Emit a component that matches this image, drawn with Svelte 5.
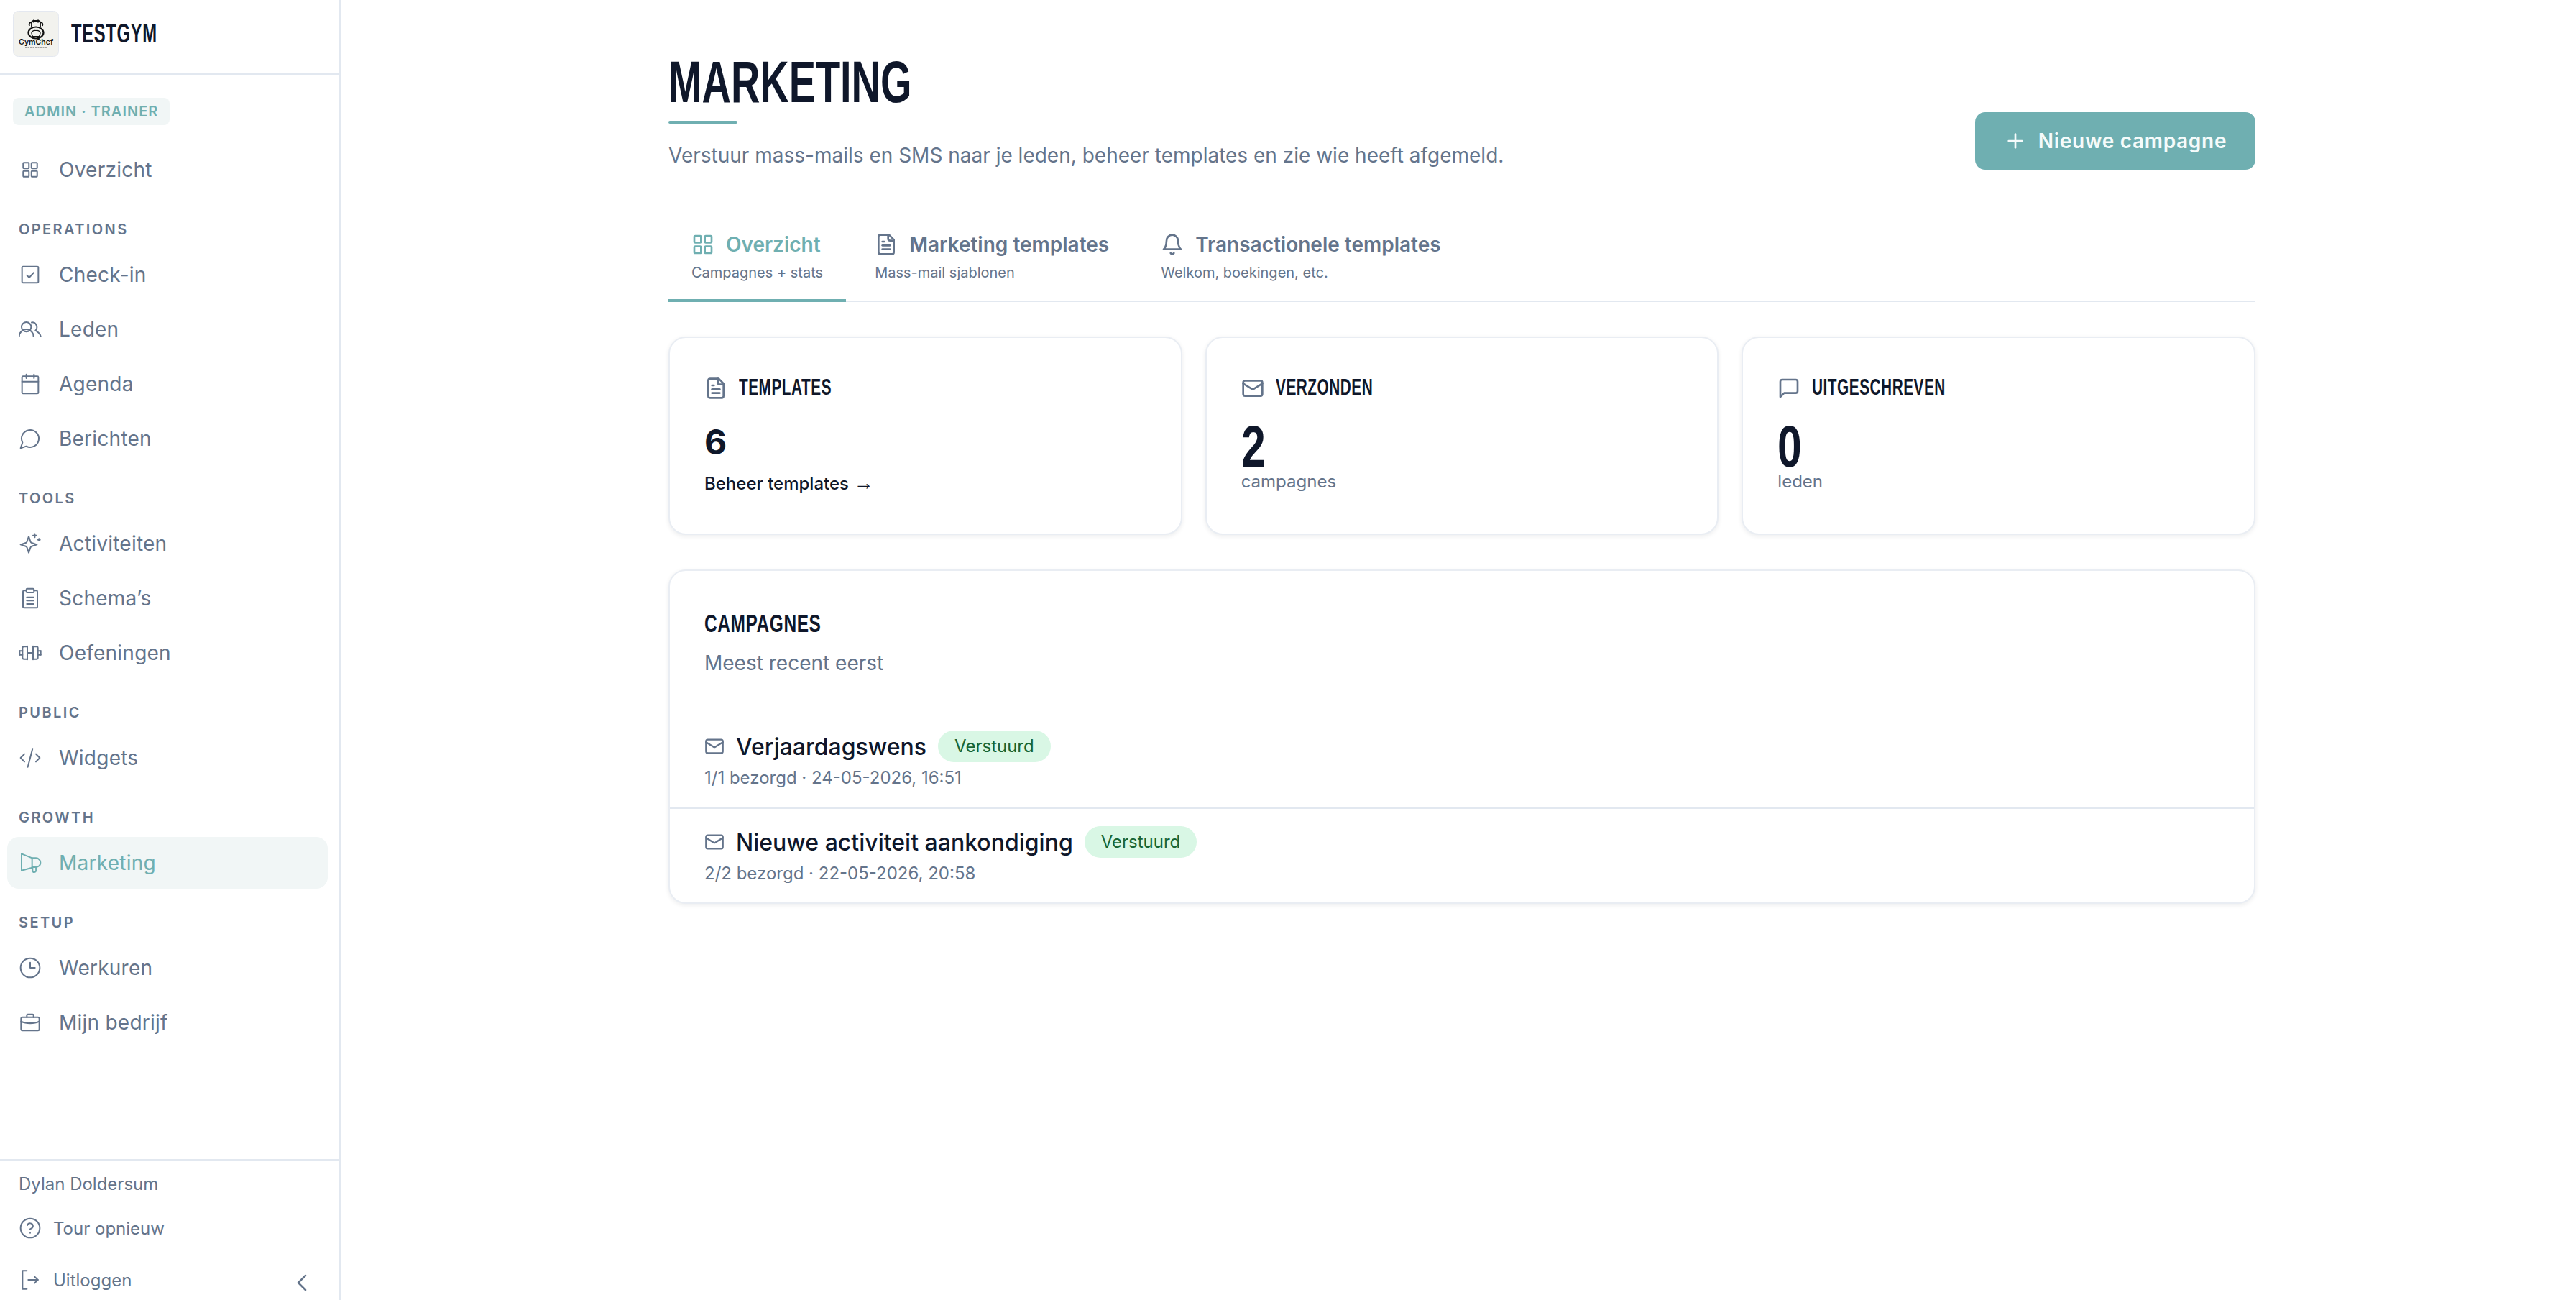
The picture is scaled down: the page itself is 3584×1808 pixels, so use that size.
<script lang="ts">
  // icon paths, 24 unit box
  const circle = 'M22 12a10 10 0 1 1-20 0 10 10 0 0 1 20 0z'
  const mail = ['M4 4h16a2 2 0 0 1 2 2v12a2 2 0 0 1-2 2H4a2 2 0 0 1-2-2V6a2 2 0 0 1 2-2z', 'm22 7-8.97 5.7a1.94 1.94 0 0 1-2.06 0L2 7']
  const fileText = ['M15 2H6a2 2 0 0 0-2 2v16a2 2 0 0 0 2 2h12a2 2 0 0 0 2-2V7Z', 'M14 2v4a2 2 0 0 0 2 2h4', 'M10 9H8', 'M16 13H8', 'M16 17H8']
  const icons: Record<string, string[]> = {
    grid: ['M5.5 4.7h4.4a.8.8 0 0 1 .8.8v4.4a.8.8 0 0 1-.8.8H5.5a.8.8 0 0 1-.8-.8V5.5a.8.8 0 0 1 .8-.8z', 'M14.1 4.7h4.4a.8.8 0 0 1 .8.8v4.4a.8.8 0 0 1-.8.8h-4.4a.8.8 0 0 1-.8-.8V5.5a.8.8 0 0 1 .8-.8z', 'M5.5 13.3h4.4a.8.8 0 0 1 .8.8v4.4a.8.8 0 0 1-.8.8H5.5a.8.8 0 0 1-.8-.8v-4.4a.8.8 0 0 1 .8-.8z', 'M14.1 13.3h4.4a.8.8 0 0 1 .8.8v4.4a.8.8 0 0 1-.8.8h-4.4a.8.8 0 0 1-.8-.8v-4.4a.8.8 0 0 1 .8-.8z'],
    gridLarge: ['M4 3h5a1 1 0 0 1 1 1v5a1 1 0 0 1-1 1H4a1 1 0 0 1-1-1V4a1 1 0 0 1 1-1z', 'M15 3h5a1 1 0 0 1 1 1v5a1 1 0 0 1-1 1h-5a1 1 0 0 1-1-1V4a1 1 0 0 1 1-1z', 'M4 14h5a1 1 0 0 1 1 1v5a1 1 0 0 1-1 1H4a1 1 0 0 1-1-1v-5a1 1 0 0 1 1-1z', 'M15 14h5a1 1 0 0 1 1 1v5a1 1 0 0 1-1 1h-5a1 1 0 0 1-1-1v-5a1 1 0 0 1 1-1z'],
    check: ['M4.5 3.5h15a1 1 0 0 1 1 1v15a1 1 0 0 1-1 1h-15a1 1 0 0 1-1-1v-15a1 1 0 0 1 1-1z', 'm8.5 12.5 2.5 2.5 4.5-5'],
    users: ['M15.5 19.5a7.5 7.5 0 0 0-15 0', 'M13 9.5a5 5 0 1 1-10 0 5 5 0 0 1 10 0z', 'M13.5 4.8a5 5 0 0 1 4 8.5c2.8 1.5 5 3.8 5.5 6.2'],
    calendar: ['M8 2v4', 'M16 2v4', 'M4.5 4h15a1 1 0 0 1 1 1v16a1 1 0 0 1-1 1h-15a1 1 0 0 1-1-1V5a1 1 0 0 1 1-1z', 'M3.5 9.5h17'],
    message: ['M7.9 20A9 9 0 1 0 4 16.1L2 22Z'],
    sparkle: ['M10.5 4.5l1.8 5.4a2 2 0 0 0 1.3 1.3l5.4 1.8-5.4 1.8a2 2 0 0 0-1.3 1.3l-1.8 5.4-1.8-5.4a2 2 0 0 0-1.3-1.3L2 13l5.4-1.8a2 2 0 0 0 1.3-1.3z', 'M16.8 1.8v3.6', 'M15 3.6h3.6', 'M21.2 7v2', 'M20.2 8h2'],
    clipboard: ['M9 2h6a1 1 0 0 1 1 1v2a1 1 0 0 1-1 1H9a1 1 0 0 1-1-1V3a1 1 0 0 1 1-1z', 'M16 4h2.5a1 1 0 0 1 1 1v16a1 1 0 0 1-1 1h-13a1 1 0 0 1-1-1V5a1 1 0 0 1 1-1H8', 'M8.5 11h7', 'M8.5 14.5h7', 'M8.5 18h7'],
    dumbbell: ['M9 5v14', 'M15 5v14', 'M9 12h6', 'M1 10v4', 'M23 10v4', 'M9 5.5H5.5A1.5 1.5 0 0 0 4 7v10a1.5 1.5 0 0 0 1.5 1.5H9', 'M15 5.5h3.5A1.5 1.5 0 0 1 20 7v10a1.5 1.5 0 0 1-1.5 1.5H15', 'M4 10H1', 'M4 14H1', 'M20 10h3', 'M20 14h3'],
    code: ['m18 16 4-4-4-4', 'm6 8-4 4 4 4', 'm14.5 2.5-5 19'],
    megaphone: ['M3 2.5l11 4.5v10L3 20z', 'M14 7h4a4.75 4.75 0 0 1 0 9.5h-4', 'M14.5 17v3a1.8 1.8 0 0 0 3.6 0v-3.5'],
    clock: [circle, 'M12 6.5V12h5'],
    briefcase: ['M4 6.5h16A1.5 1.5 0 0 1 21.5 8v11a1.5 1.5 0 0 1-1.5 1.5H4A1.5 1.5 0 0 1 2.5 19V8A1.5 1.5 0 0 1 4 6.5z', 'M8.5 6.5v-2a1 1 0 0 1 1-1h5a1 1 0 0 1 1 1v2', 'M2.5 11c3 1.5 6 2 9.5 2s6.5-.5 9.5-2', 'M11 12.5h2'],
    help: [circle, 'M9.09 9a3 3 0 0 1 5.83 1c0 2-3 3-3 3', 'M12 17h.01'],
    logout: ['M8.5 2.5H4v19h4.5', 'M10 12h10', 'm16.5 8.5 3.5 3.5-3.5 3.5'],
    chevron: ['m15 18-6-6 6-6'],
    plus: ['M5 12h14', 'M12 5v14'],
    bell: ['M6 8a6 6 0 0 1 12 0c0 7 3 9 3 9H3s3-2 3-9', 'M10.3 21a1.94 1.94 0 0 0 3.4 0'],
    fileText,
    mail,
    square: ['M21 15a2 2 0 0 1-2 2H7l-4 4V5a2 2 0 0 1 2-2h14a2 2 0 0 1 2 2z']
  }

  const navGroups = [
    { label: '', items: [{ name: 'Overzicht', icon: 'grid' }] },
    { label: 'Operations', items: [
      { name: 'Check-in', icon: 'check' },
      { name: 'Leden', icon: 'users' },
      { name: 'Agenda', icon: 'calendar' },
      { name: 'Berichten', icon: 'message' }
    ] },
    { label: 'Tools', items: [
      { name: 'Activiteiten', icon: 'sparkle' },
      { name: 'Schema’s', icon: 'clipboard' },
      { name: 'Oefeningen', icon: 'dumbbell' }
    ] },
    { label: 'Public', items: [{ name: 'Widgets', icon: 'code' }] },
    { label: 'Growth', items: [{ name: 'Marketing', icon: 'megaphone', active: true }] },
    { label: 'Setup', items: [
      { name: 'Werkuren', icon: 'clock' },
      { name: 'Mijn bedrijf', icon: 'briefcase' }
    ] }
  ]

  const tabs = [
    { title: 'Overzicht', sub: 'Campagnes + stats', icon: 'gridLarge', active: true },
    { title: 'Marketing templates', sub: 'Mass-mail sjablonen', icon: 'fileText' },
    { title: 'Transactionele templates', sub: 'Welkom, boekingen, etc.', icon: 'bell' }
  ]

  const campaigns = [
    { name: 'Verjaardagswens', meta: '1/1 bezorgd · 24-05-2026, 16:51' },
    { name: 'Nieuwe activiteit aankondiging', meta: '2/2 bezorgd · 22-05-2026, 20:58' }
  ]
</script>

{#snippet icon(name: string, size = 16, stroke = 2)}
  <svg class="icon" width={size} height={size} viewBox="0 0 24 24" fill="none" stroke="currentColor" stroke-width={stroke} stroke-linecap="round" stroke-linejoin="round">
    {#each icons[name] as d}
      <path {d} />
    {/each}
  </svg>
{/snippet}

<div class="app">
  <aside class="sidebar">
    <div class="brand">
      <svg class="logo" width="32" height="32" viewBox="0 0 64 64">
        <rect x="0.5" y="0.5" width="63" height="63" rx="7" fill="#f2f2ee" stroke="#e4e8f0" />
        <g fill="none" stroke="#111" stroke-width="1.8">
          <path d="M26 23v-6a3 3 0 0 1 3-3h6a3 3 0 0 1 3 3v6" />
          <path d="M23 21c-1-3 0-5 3-5M41 21c1-3 0-5-3-5" />
          <path d="M29 12.5v4M35 12.5v4M29 14.5h6" />
          <ellipse cx="32" cy="30.5" rx="10.5" ry="8" stroke-width="2.2" />
          <path d="M26.5 33c-2-4 2-6 5.5-5.5 3.5-.5 7.5 1.5 5.5 5.5l-1 2.5h-9z" stroke-width="1.2" />
        </g>
        <text x="32" y="47" text-anchor="middle" class="logo-text">GymChef</text>
        <path d="M17 51h30" stroke="#555" stroke-width="1" stroke-dasharray="2 1.5" />
      </svg>
      <span class="brand-name">TESTGYM</span>
    </div>

    <nav class="nav">
      <span class="role">ADMIN · TRAINER</span>
      {#each navGroups as group}
        <div class="group">
          {#if group.label}
            <div class="group-label">{group.label}</div>
          {/if}
          {#each group.items as item}
            <a class="nav-item" class:active={item.active} href="#top">
              {@render icon(item.icon, 16, 1.5)}
              <span>{item.name}</span>
            </a>
          {/each}
        </div>
      {/each}
    </nav>

    <div class="foot">
      <div class="user">Dylan Doldersum</div>
      <a class="foot-link" href="#top">
        {@render icon('help', 16, 1.5)}
        <span>Tour opnieuw</span>
      </a>
      <div class="foot-row">
        <a class="foot-link" href="#top">
          {@render icon('logout', 16, 1.5)}
          <span>Uitloggen</span>
        </a>
        <button class="collapse" aria-label="Inklappen">
          {@render icon('chevron', 20, 1.5)}
        </button>
      </div>
    </div>
  </aside>

  <main class="main">
    <header class="page-head">
      <div>
        <h1><span>MARKETING</span></h1>
        <div class="accent"></div>
        <p class="lead">Verstuur mass-mails en SMS naar je leden, beheer templates en zie wie heeft afgemeld.</p>
      </div>
      <button class="primary">
        {@render icon('plus')}
        Nieuwe campagne
      </button>
    </header>

    <div class="tabs">
      {#each tabs as tab}
        <button class="tab" class:active={tab.active}>
          <span class="tab-title">
            {@render icon(tab.icon)}
            {tab.title}
          </span>
          <span class="tab-sub">{tab.sub}</span>
        </button>
      {/each}
    </div>

    <section class="stats">
      <div class="card stat">
        <div class="stat-head">
          {@render icon('fileText')}
          <span class="stat-label">TEMPLATES</span>
        </div>
        <div class="stat-num">6</div>
        <a class="stat-link" href="#top">Beheer templates <span class="arrow">→</span></a>
      </div>
      <div class="card stat">
        <div class="stat-head">
          {@render icon('mail')}
          <span class="stat-label">VERZONDEN</span>
        </div>
        <div class="stat-big"><span>2</span></div>
        <div class="stat-sub">campagnes</div>
      </div>
      <div class="card stat">
        <div class="stat-head">
          {@render icon('square')}
          <span class="stat-label">UITGESCHREVEN</span>
        </div>
        <div class="stat-big"><span>0</span></div>
        <div class="stat-sub">leden</div>
      </div>
    </section>

    <section class="card campaigns">
      <div class="campaigns-head">
        <h2><span>CAMPAGNES</span></h2>
        <p>Meest recent eerst</p>
      </div>
      <div class="rows">
        {#each campaigns as c}
          <div class="row">
            <div class="row-top">
              {@render icon('mail', 14)}
              <span class="row-name">{c.name}</span>
              <span class="badge">Verstuurd</span>
            </div>
            <div class="row-meta">{c.meta}</div>
          </div>
        {/each}
      </div>
    </section>
  </main>
</div>

<style>
  :global(body) {
    margin: 0;
    background: #fff;
    overflow: hidden;
  }

  /* the design is 1792x904 at 2x */
  .app {
    zoom: 2;
    display: flex;
    height: 904px;
    font-family: Inter, 'Liberation Sans', sans-serif;
    color: #0f172a;
    overflow: hidden;
  }

  a {
    color: inherit;
    text-decoration: none;
  }

  button {
    font: inherit;
    background: none;
    border: none;
    padding: 0;
    cursor: pointer;
  }

  .icon {
    flex-shrink: 0;
    display: block;
  }

  .sidebar {
    width: 237px;
    flex-shrink: 0;
    border-right: 1px solid #e2e8f0;
    display: flex;
    flex-direction: column;
    box-sizing: border-box;
  }

  .brand {
    height: 52px;
    box-sizing: border-box;
    padding: 0 9px 4px;
    border-bottom: 1px solid #e2e8f0;
    display: flex;
    align-items: center;
    gap: 8.5px;
  }

  .logo {
    flex-shrink: 0;
    display: block;
  }

  .logo-text {
    font-family: Inter, sans-serif;
    font-size: 10.5px;
    font-weight: 600;
    fill: #111;
  }

  /* heading font is condensed, only regular widths are installed */
  .brand-name {
    font-family: 'Liberation Sans', sans-serif;
    font-size: 18.5px;
    font-weight: 700;
    letter-spacing: 0.5px;
    display: inline-block;
    transform: scaleX(0.644);
    transform-origin: left center;
  }

  .nav {
    flex: 1;
    padding: 16px 8px 0 5px;
  }

  .role {
    display: block;
    width: fit-content;
    margin-left: 4px;
    padding: 0 8px;
    height: 19px;
    line-height: 19px;
    border-radius: 4px;
    background: #f1f6f6;
    color: #6fafb1;
    font-size: 10px;
    font-weight: 600;
    letter-spacing: 0.5px;
  }

  .group {
    margin-top: 16px;
  }

  .role + .group {
    margin-top: 13px;
  }

  .group-label {
    padding-left: 8px;
    margin-bottom: 6px;
    font-size: 10px;
    line-height: 15px;
    font-weight: 600;
    letter-spacing: 1.2px;
    text-transform: uppercase;
    color: #64748b;
  }

  .nav-item {
    display: flex;
    align-items: center;
    gap: 12px;
    height: 36px;
    padding: 0 8px;
    margin-bottom: 2px;
    border-radius: 8px;
    font-size: 14px;
    letter-spacing: 0.12px;
    color: #64748b;
  }

  .nav-item.active {
    background: #f1f6f6;
    color: #6fafb1;
  }

  .foot {
    border-top: 1px solid #e2e8f0;
    padding: 7.5px 0 0 13px;
    height: 98px;
    box-sizing: border-box;
  }

  .user {
    font-size: 12px;
    line-height: 18px;
    color: #64748b;
    margin-bottom: 3.5px;
  }

  .foot-link {
    display: flex;
    align-items: center;
    gap: 8px;
    height: 36px;
    font-size: 12px;
    color: #64748b;
  }

  .foot-row {
    display: flex;
    justify-content: space-between;
    align-items: center;
    padding-right: 16px;
  }

  .collapse {
    color: #64748b;
    margin-top: 4px;
  }

  .main {
    flex: 1;
    padding-left: 228px;
    min-width: 0;
  }

  .page-head {
    width: 1104px;
    height: 118px;
    display: flex;
    justify-content: space-between;
    align-items: flex-end;
  }

  h1 {
    margin: 0;
    font-family: 'Liberation Sans', sans-serif;
    font-size: 40.5px;
    line-height: 46px;
    font-weight: 700;
  }

  h1 span {
    display: inline-block;
    transform: scaleX(0.69);
    transform-origin: left center;
  }

  .accent {
    width: 48px;
    height: 2px;
    margin-top: 4px;
    border-radius: 1px;
    background: #6fafb1;
  }

  .lead {
    margin: 12px 0 0;
    font-size: 14px;
    line-height: 20px;
    color: #64748b;
  }

  .primary {
    width: 195px;
    height: 40px;
    border-radius: 7px;
    background: #6fafb1;
    color: #f5fbfb;
    display: flex;
    align-items: center;
    justify-content: center;
    gap: 8px;
    font-size: 14px;
    font-weight: 600;
    letter-spacing: 0.35px;
  }

  .tabs {
    width: 1104px;
    margin-top: 26px;
    display: flex;
    gap: 4px;
    border-bottom: 1px solid #e2e8f0;
  }

  .tab {
    padding: 13px 16px 8px;
    height: 66px;
    box-sizing: border-box;
    margin-bottom: -1px;
    display: flex;
    flex-direction: column;
    align-items: flex-start;
    justify-content: center;
    gap: 2px;
    color: #64748b;
    border-bottom: 2px solid transparent;
  }

  .tab.active {
    color: #6fafb1;
    border-bottom-color: #6fafb1;
  }

  .tab-title {
    display: flex;
    align-items: center;
    gap: 8px;
    font-size: 14px;
    line-height: 20px;
    font-weight: 600;
  }

  .tab-sub {
    font-size: 10px;
    line-height: 15px;
    color: #64748b;
  }

  .card {
    box-sizing: border-box;
    border: 1px solid #e9edf3;
    border-radius: 12px;
    background: #fff;
    box-shadow: 0 1px 3px rgba(15, 23, 42, 0.08);
  }

  .stats {
    width: 1104px;
    margin-top: 24px;
    display: grid;
    grid-template-columns: repeat(3, 1fr);
    gap: 16px;
  }

  .stat {
    height: 138px;
    padding: 24px;
  }

  .stat-head {
    display: flex;
    align-items: center;
    gap: 8px;
    height: 22px;
    color: #64748b;
  }

  .stat-label {
    font-family: 'Liberation Sans', sans-serif;
    font-size: 16px;
    font-weight: 700;
    color: #0f172a;
    letter-spacing: 0.4px;
    margin-top: -2px;
    display: inline-block;
    transform: scaleX(0.65);
    transform-origin: left center;
  }

  .stat-num {
    margin-top: 10.3px;
    font-size: 24px;
    line-height: 32px;
    font-weight: 700;
  }

  .stat-link {
    display: block;
    margin-top: 3.5px;
    font-size: 12px;
    line-height: 18px;
    font-weight: 500;
  }

  .arrow {
    font-family: 'Liberation Sans', sans-serif;
    font-size: 14px;
    font-weight: 400;
  }

  .stat-big {
    margin-top: 14px;
    height: 31px;
    line-height: 31px;
    font-family: 'Liberation Sans', sans-serif;
    font-size: 40.5px;
    font-weight: 700;
  }

  .stat-big span {
    display: inline-block;
    transform: scaleX(0.75);
    transform-origin: left center;
  }

  .stat-sub {
    font-size: 12px;
    line-height: 18px;
    color: #64748b;
  }

  .campaigns {
    width: 1104px;
    margin-top: 24px;
  }

  .campaigns-head {
    padding: 24px 24px 25px;
  }

  h2 {
    margin: 0;
    font-family: 'Liberation Sans', sans-serif;
    font-size: 17.5px;
    line-height: 25px;
    font-weight: 700;
    letter-spacing: 0.4px;
  }

  h2 span {
    display: inline-block;
    transform: scaleX(0.7);
    transform-origin: left center;
  }

  .campaigns-head p {
    margin: 5px 0 0;
    font-size: 14px;
    line-height: 20px;
    color: #64748b;
  }

  .row {
    padding: 12px 24px 12.5px;
    border-top: 1px solid #e2e8f0;
  }

  .row:first-child {
    border-top: none;
  }

  .row:last-child {
    padding-bottom: 12px;
  }

  .row-top {
    display: flex;
    align-items: center;
    gap: 8px;
    height: 22px;
    color: #64748b;
  }

  .row-name {
    font-size: 16px;
    font-weight: 500;
    color: #0f172a;
  }

  .badge {
    height: 22px;
    line-height: 22px;
    padding: 0 11.5px;
    border-radius: 11px;
    background: #d9f7e5;
    color: #166534;
    font-size: 12px;
  }

  .row-meta {
    margin-top: 3px;
    font-size: 12px;
    line-height: 16px;
    color: #64748b;
  }
</style>
